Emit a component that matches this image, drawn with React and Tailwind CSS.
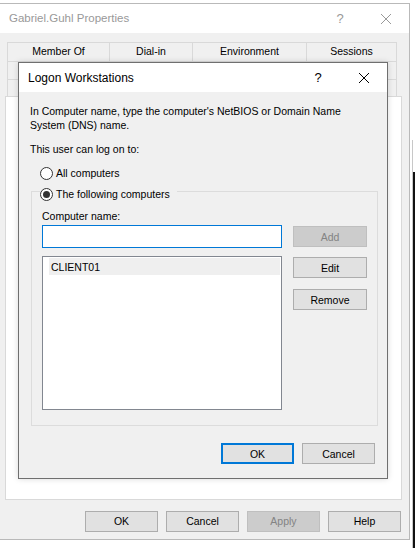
import React from 'react';

const font = { fontFamily: '"Liberation Sans", Arial, sans-serif' };

function Button({ children, disabled, primary, className = '' }) {
  const look = disabled
    ? 'border-[#bfbfbf] bg-[#cccccc] text-[#838383]'
    : primary
      ? 'border-2 border-[#0078d7] bg-[#e1e1e1] text-black'
      : 'border-[#adadad] bg-[#e1e1e1] text-black';
  return (
    <div className={`flex h-[21px] w-[73px] items-center justify-center border text-[10.5px] ${look} ${className}`}>
      {children}
    </div>
  );
}

function Radio({ checked, label }) {
  return (
    <div className="flex h-[16px] items-center gap-[3px]">
      <span className="flex h-[13px] w-[13px] items-center justify-center rounded-full border border-[#333333] bg-white">
        {checked && <span className="h-[7px] w-[7px] rounded-full bg-[#333333]" />}
      </span>
      <span className="text-[10.5px] text-black">{label}</span>
    </div>
  );
}

function TitleButtons({ muted }) {
  const color = muted ? 'text-[#999999]' : 'text-black';
  return (
    <div className={`flex items-center ${color}`}>
      <span className="w-[46px] text-center text-[13px]">?</span>
      <svg width="46" height="12" viewBox="0 0 46 12">
        <path d="M18 1 L28 11 M28 1 L18 11" stroke="currentColor" strokeWidth="1" />
      </svg>
    </div>
  );
}

function LogonWorkstations() {
  return (
    <div className="absolute left-[18px] top-[62px] flex h-[417px] w-[370px] flex-col border border-[#6f6f6f] bg-[#f0f0f0] shadow-[0_0_6px_rgba(0,0,0,0.15)]">
      <div className="flex h-[29px] items-center justify-between bg-white pl-[9px]">
        <span className="text-[12px] text-black">Logon Workstations</span>
        <TitleButtons />
      </div>

      <div className="flex flex-1 flex-col pl-[11px] pr-[9px] pt-[12px] text-[10.5px] leading-[14px] text-black">
        <p>In Computer name, type the computer's NetBIOS or Domain Name</p>
        <p>System (DNS) name.</p>
        <p className="mt-[10px]">This user can log on to:</p>
        <div className="ml-[10px] mt-[9px]">
          <Radio label="All computers" />
        </div>

        <fieldset className="-mt-[1px] ml-[1px] w-[347px] border border-[#dcdcdc] pb-[15px]">
          <legend className="ml-[8px] pr-[7px] pt-[6px]">
            <Radio checked label="The following computers" />
          </legend>
          <div className="pl-[10px] pt-[7px]">
            <p>Computer name:</p>
            <div className="mt-[2px] flex gap-[11px]">
              <div className="flex w-[240px] flex-col">
                <div className="h-[23px] border border-[#0078d7] bg-white" />
                <div className="mt-[8px] h-[154px] border border-[#828790] bg-white p-[1px]">
                  <div className="ml-[5px] flex h-[17px] items-center bg-[#efefef] pl-[2px]">CLIENT01</div>
                </div>
              </div>
              <div className="flex flex-col">
                <Button disabled className="mt-[1px] w-[74px]">Add</Button>
                <Button className="mt-[10px] w-[74px]">Edit</Button>
                <Button className="mt-[11px] w-[74px]">Remove</Button>
              </div>
            </div>
          </div>
        </fieldset>

        <div className="mt-[17px] flex justify-end gap-[8px] pr-[3px]">
          <Button primary>OK</Button>
          <Button>Cancel</Button>
        </div>
      </div>
    </div>
  );
}

function TabRow({ cells, className = '' }) {
  return (
    <div className={`flex ${className}`}>
      {cells.map(([label, width], i) => (
        <div
          key={i}
          className={`flex items-center justify-center border-t border-r border-[#d9d9d9] text-[10.5px] text-black ${i === 0 ? 'border-l' : ''}`}
          style={{ width }}
        >
          {label}
        </div>
      ))}
    </div>
  );
}

const blankTabs = [['', 103], ['', 83], ['', 114], ['', 90]];

export default function App() {
  return (
    <div className="relative h-[548px] w-[415px] overflow-hidden bg-white" style={font}>
      <div className="pt-[3px]">
        <div className="flex h-[537px] w-[410px] flex-col border-y border-r border-[#b9b9b9]">
          <div className="flex h-[29px] items-center justify-between bg-white pl-[9px]">
            <span className="text-[11.5px] text-[#999999]">Gabriel.Guhl Properties</span>
            <TitleButtons muted />
          </div>

          <div className="flex flex-1 flex-col bg-[#f0f0f0]">
            <div className="ml-[7px] mt-[9px]">
              <TabRow cells={[['Member Of', 103], ['Dial-in', 83], ['Environment', 114], ['Sessions', 90]]} className="h-[19px]" />
              <TabRow cells={blankTabs} className="h-[18px]" />
              <TabRow cells={blankTabs} className="h-[17px]" />
            </div>
            <div className="ml-[5px] h-[404px] w-[397px] border border-[#d9d9d9] bg-white" />

            <div className="mt-[11px] flex gap-[8px] pl-[85px]">
              <Button>OK</Button>
              <Button>Cancel</Button>
              <Button disabled>Apply</Button>
              <Button>Help</Button>
            </div>
          </div>
        </div>
      </div>

      <div className="absolute right-0 top-[140px] h-[408px] w-[3px] border-l border-[#c8c8c8]">
        <div className="mt-[32px] h-full bg-[#111111]" />
      </div>

      <LogonWorkstations />
    </div>
  );
}
